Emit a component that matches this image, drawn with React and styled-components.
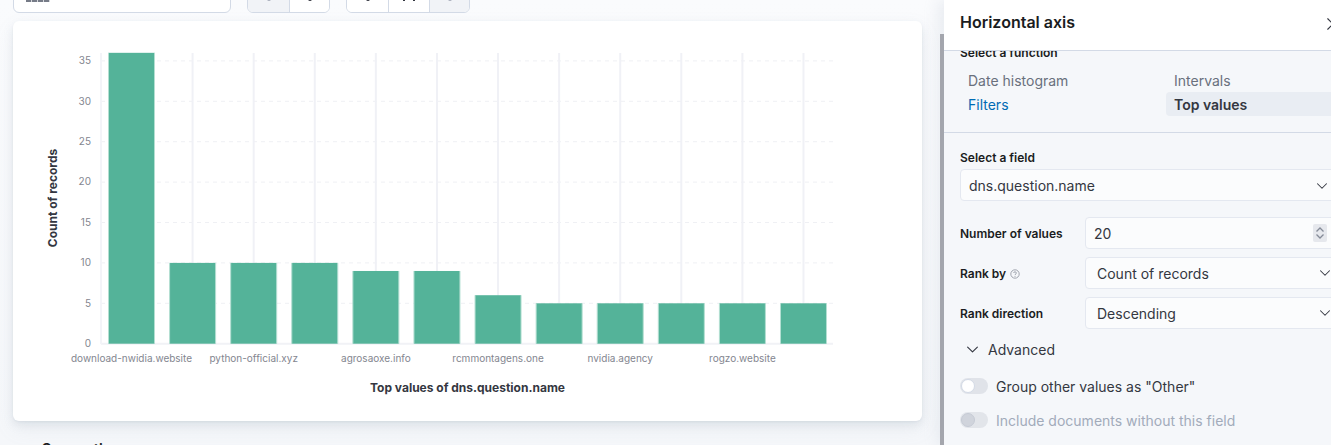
import React from "react";
import styled, { createGlobalStyle } from "styled-components";

const GlobalStyle = createGlobalStyle`
  html, body {
    margin: 0;
    padding: 0;
    width: 1331px;
    height: 445px;
    overflow: hidden;
    background: #f8f9fc;
    font-family: Inter, "Noto Sans", sans-serif;
  }
`;

const Page = styled.div`
  display: flex;
  width: 1331px;
  height: 445px;
  overflow: hidden;
  background: linear-gradient(180deg, #fafbfd 0%, #f5f7fa 100%);
`;

const Workspace = styled.div`
  flex: 0 0 940px;
  width: 940px;
  height: 445px;
  overflow: hidden;
`;

const Toolbar = styled.div`
  display: flex;
  align-items: flex-end;
  height: 13px;
  padding-left: 13px;
`;

const SearchBox = styled.div`
  display: flex;
  align-items: flex-end;
  width: 218px;
  height: 40px;
  box-sizing: border-box;
  padding: 0 0 10px 12px;
  background: #fff;
  border: 1px solid #d3dae6;
  border-radius: 6px;
`;

const SearchDots = styled.div`
  width: 24px;
  height: 3px;
  background: repeating-linear-gradient(90deg, #767b87 0 5px, #d5d7dc 5px 6px);
`;

const ButtonGroup = styled.div`
  display: flex;
  height: 40px;
  margin-left: 16px;
  box-sizing: border-box;
  border: 1px solid #d3dae6;
  border-radius: 6px;
  overflow: hidden;
  background: #fff;
`;

const GroupButton = styled.div`
  display: flex;
  justify-content: center;
  align-items: flex-end;
  width: ${(p) => p.$width}px;
  box-sizing: border-box;
  padding-bottom: 11px;
  background: ${(p) => (p.$muted ? "#f1f3f7" : "#fff")};
  border-left: ${(p) => (p.$first ? "none" : "1px solid #d3dae6")};
`;

const ButtonIconStub = styled.div`
  width: ${(p) => p.$width || 4}px;
  height: 2px;
  border-radius: 0 0 2px 2px;
  background: ${(p) => (p.$muted ? "#a9afbc" : "#343741")};
`;

const BracketStub = styled.div`
  width: 12px;
  height: 2px;
  background: linear-gradient(90deg, #343741 0 2px, transparent 2px 10px, #343741 10px 12px);
`;

const Card = styled.div`
  width: 909px;
  height: 400px;
  margin: 8px 0 0 13px;
  background: #fff;
  border-radius: 6px;
  box-shadow: 0 1px 2px rgba(152, 162, 179, 0.12), 0 4px 10px rgba(152, 162, 179, 0.18), 0 8px 20px rgba(152, 162, 179, 0.1);
  overflow: hidden;
`;

const ChartSvg = styled.svg`
  display: block;
  width: 909px;
  height: 400px;
  font-family: Inter, "Noto Sans", sans-serif;
`;

const SuggestionsTitle = styled.h3`
  margin: 18px 0 0 42px;
  font-size: 14px;
  line-height: 20px;
  font-weight: 700;
  color: #1a1c21;
`;

const ScrollThumb = styled.div`
  position: absolute;
  left: 940px;
  top: 34px;
  width: 4px;
  height: 411px;
  background: #a6a7ad;
`;

const Panel = styled.aside`
  flex: 0 0 410px;
  width: 410px;
  height: 445px;
  margin-left: 4px;
  background: #f5f7fa;
  box-shadow: -6px 0 14px rgba(152, 162, 179, 0.16);
  display: flex;
  flex-direction: column;
  overflow: hidden;
  position: relative;
`;

const PanelHeader = styled.header`
  flex: 0 0 51px;
  box-sizing: border-box;
  display: flex;
  align-items: center;
  padding: 0 16px 6px 16px;
  background: #fff;
  border-bottom: 1px solid #d3dae6;
  position: relative;
  z-index: 1;
`;

const PanelTitle = styled.h2`
  margin: 0;
  font-size: 16px;
  line-height: 24px;
  font-weight: 600;
  color: #1a1c21;
`;

const CloseButton = styled.div`
  position: absolute;
  left: 382px;
  top: 15px;
  width: 14px;
  height: 14px;
  color: #343741;
`;

const PanelBody = styled.div`
  flex: 1;
  overflow: hidden;
`;

const FunctionSection = styled.section`
  height: 87px;
  padding: 0 16px;
  margin-top: -6px;
  border-bottom: 1px solid #d3dae6;
`;

const FieldLabel = styled.div`
  font-size: 12px;
  line-height: 16px;
  font-weight: 600;
  color: #1a1c21;
`;

const FunctionGrid = styled.div`
  display: grid;
  grid-template-columns: 206px 206px;
  margin-top: 8px;
`;

const FunctionOption = styled.div`
  height: 24px;
  line-height: ${(p) => (p.$active ? 26 : 24)}px;
  margin-top: ${(p) => (p.$active ? -1 : 0)}px;
  font-size: 14px;
  padding-left: 8px;
  border-radius: 4px;
  color: ${(p) => p.$color || "#69707d"};
  font-weight: ${(p) => (p.$active ? 600 : 400)};
  background: ${(p) => (p.$active ? "#e9edf3" : "transparent")};
`;

const FieldSection = styled.section`
  padding: 17px 16px 0;
`;

const FieldBox = styled.div`
  display: flex;
  align-items: center;
  justify-content: space-between;
  box-sizing: border-box;
  height: 32px;
  margin-top: 3px;
  padding: 1px 0 0 8px;
  width: 376px;
  background: #fbfcfd;
  border: 1px solid #e4e8f0;
  border-radius: 4px;
  font-size: 14px;
  color: #343741;
`;

const Row = styled.div`
  display: flex;
  align-items: center;
  height: 32px;
  margin-top: ${(p) => p.$top}px;
`;

const RowLabel = styled.div`
  display: flex;
  align-items: center;
  gap: 4px;
  flex: 0 0 125px;
  padding-top: 1px;
  font-size: 12px;
  line-height: 16px;
  font-weight: 600;
  color: #1a1c21;
`;

const Control = styled.div`
  display: flex;
  flex: 0 0 255px;
  align-items: center;
  justify-content: space-between;
  box-sizing: border-box;
  height: 32px;
  padding: 0 0 0 ${(p) => (p.$number ? 8 : 11)}px;
  background: #fbfcfd;
  border: 1px solid #e4e8f0;
  border-radius: 4px;
  font-size: 14px;
  color: #343741;
`;

const Stepper = styled.div`
  display: flex;
  align-items: center;
  justify-content: center;
  width: 14px;
  height: 18px;
  margin-right: 12px;
  background: #e6e8ed;
  border-radius: 2px;
`;

const ChevronWrap = styled.span`
  display: inline-flex;
  margin-right: ${(p) => p.$right}px;
  color: #343741;
`;

const AdvancedToggle = styled.div`
  display: flex;
  align-items: center;
  gap: 9px;
  height: 20px;
  margin: 10px 0 0 6px;
  font-size: 14px;
  color: #343741;
`;

const SwitchRow = styled.div`
  display: flex;
  align-items: center;
  gap: 8px;
  height: 20px;
  margin-top: ${(p) => p.$top}px;
  font-size: 14px;
  color: ${(p) => (p.$disabled ? "#a2abba" : "#343741")};
`;

const SwitchTrack = styled.div`
  display: flex;
  align-items: center;
  width: 28px;
  height: 16px;
  border-radius: 8px;
  background: ${(p) => (p.$disabled ? "#e2e5ea" : "#e0e3e9")};
`;

const SwitchThumb = styled.div`
  width: 14px;
  height: 14px;
  margin-left: 1px;
  box-sizing: border-box;
  border-radius: 50%;
  background: ${(p) => (p.$disabled ? "#d0d4dc" : "#fff")};
  border: 1px solid ${(p) => (p.$disabled ? "#c6cbd5" : "#d3dae6")};
`;

const values = [36, 10, 10, 10, 9, 9, 6, 5, 5, 5, 5, 5];
const labels = ["download-nwidia.website", "python-official.xyz", "agrosaoxe.info", "rcmmontagens.one", "nvidia.agency", "rogzo.website"];
const ticks = [0, 5, 10, 15, 20, 25, 30, 35];

// chart coordinates are relative to the card, which starts at 13,21
const axisLeft = 88;
const axisRight = 820;
const baseline = 322.7;
const unit = 8.08;
const firstCenter = 118.5;
const step = 61.09;

function Chart() {
  return (
    <ChartSvg viewBox="0 0 909 400">
      {ticks.map((t) => (
        <line
          key={t}
          x1={axisLeft}
          x2={axisRight}
          y1={baseline - t * unit}
          y2={baseline - t * unit}
          stroke={t === 0 ? "#f1f2f6" : "#eff0f4"}
          strokeWidth={t === 0 ? 2 : 1}
          strokeDasharray={t === 0 ? undefined : "4 4"}
        />
      ))}
      <line x1={axisLeft} x2={axisLeft} y1={32} y2={323} stroke="#f3f4f8" strokeWidth="2" />
      {values.map((_, i) => (
        <line
          key={i}
          x1={firstCenter + i * step}
          x2={firstCenter + i * step}
          y1={32}
          y2={323}
          stroke="#f0f1f6"
          strokeWidth="2"
        />
      ))}
      {values.map((v, i) => (
        <g key={i}>
          <rect
            x={firstCenter + i * step - 23}
            y={baseline - v * unit}
            width={46}
            height={v * unit}
            fill="#54b399"
          />
          <rect x={firstCenter + i * step - 23.5} y={baseline - v * unit} width={1} height={v * unit} fill="#b4dfd2" />
          <rect x={firstCenter + i * step + 22.5} y={baseline - v * unit} width={1} height={v * unit} fill="#b4dfd2" />
        </g>
      ))}
      {ticks.map((t) => (
        <text key={t} x={78} y={baseline - t * unit + 3.2} textAnchor="end" fontSize="10" fill="#83868f">
          {t}
        </text>
      ))}
      {labels.map((l, i) => (
        <text key={l} x={firstCenter + i * 2 * step} y={341} textAnchor="middle" fontSize="10" fill="#83868f">
          {l}
        </text>
      ))}
      <text x={454.5} y={371} textAnchor="middle" fontSize="12" fontWeight="700" fill="#343741">
        Top values of dns.question.name
      </text>
      <text
        transform="translate(44 177) rotate(-90)"
        textAnchor="middle"
        fontSize="12"
        fontWeight="700"
        fill="#343741"
      >
        Count of records
      </text>
    </ChartSvg>
  );
}

function Chevron({ size = 12 }) {
  return (
    <svg width={size} height={size} viewBox="0 0 16 16" fill="none">
      <path
        d="M2 5 L8 11 L14 5"
        stroke="currentColor"
        strokeWidth="1.4"
        strokeLinecap="round"
        strokeLinejoin="round"
      />
    </svg>
  );
}

function HelpIcon() {
  return (
    <svg width="10" height="10" viewBox="0 0 10 10" fill="none">
      <circle cx="5" cy="5" r="4.2" stroke="#8c919c" strokeWidth="0.8" />
      <path d="M3.6 4 C3.6 2.4 6.4 2.4 6.4 4 C6.4 5 5 5 5 6" stroke="#8c919c" strokeWidth="0.8" />
      <circle cx="5" cy="7.3" r="0.5" fill="#8c919c" />
    </svg>
  );
}

export default function App() {
  return (
    <>
      <GlobalStyle />
      <Page>
        <Workspace>
          <Toolbar>
            <SearchBox>
              <SearchDots />
            </SearchBox>
            <ButtonGroup>
              <GroupButton $width={41} $first $muted>
                <ButtonIconStub $muted />
              </GroupButton>
              <GroupButton $width={40}>
                <ButtonIconStub />
              </GroupButton>
            </ButtonGroup>
            <ButtonGroup>
              <GroupButton $width={41} $first>
                <ButtonIconStub />
              </GroupButton>
              <GroupButton $width={41}>
                <BracketStub />
              </GroupButton>
              <GroupButton $width={40} $muted>
                <ButtonIconStub $muted />
              </GroupButton>
            </ButtonGroup>
          </Toolbar>
          <Card>
            <Chart />
          </Card>
          <SuggestionsTitle>Suggestions</SuggestionsTitle>
        </Workspace>
        <ScrollThumb />
        <Panel>
          <PanelHeader>
            <PanelTitle>Horizontal axis</PanelTitle>
            <CloseButton>
              <svg width="14" height="14" viewBox="0 0 16 16" fill="none">
                <path d="M2 2 L14 14 M14 2 L2 14" stroke="currentColor" strokeWidth="1.3" strokeLinecap="round" />
              </svg>
            </CloseButton>
          </PanelHeader>
          <PanelBody>
            <FunctionSection>
              <FieldLabel>Select a function</FieldLabel>
              <FunctionGrid>
                <FunctionOption>Date histogram</FunctionOption>
                <FunctionOption>Intervals</FunctionOption>
                <FunctionOption $color="#006bb4">Filters</FunctionOption>
                <FunctionOption $active $color="#343741">
                  Top values
                </FunctionOption>
              </FunctionGrid>
            </FunctionSection>
            <FieldSection>
              <FieldLabel>Select a field</FieldLabel>
              <FieldBox>
                dns.question.name
                <ChevronWrap $right={7}>
                  <Chevron />
                </ChevronWrap>
              </FieldBox>
              <Row $top={16}>
                <RowLabel>Number of values</RowLabel>
                <Control $number>
                  20
                  <Stepper>
                    <svg width="10" height="16" viewBox="0 0 10 16" fill="none">
                      <path d="M1.5 6.5 L5 3 L8.5 6.5 M1.5 9.5 L5 13 L8.5 9.5" stroke="#858b98" strokeWidth="1.3" />
                    </svg>
                  </Stepper>
                </Control>
              </Row>
              <Row $top={8}>
                <RowLabel>
                  Rank by
                  <HelpIcon />
                </RowLabel>
                <Control>
                  Count of records
                  <ChevronWrap $right={8}>
                    <Chevron />
                  </ChevronWrap>
                </Control>
              </Row>
              <Row $top={8}>
                <RowLabel>Rank direction</RowLabel>
                <Control>
                  Descending
                  <ChevronWrap $right={8}>
                    <Chevron />
                  </ChevronWrap>
                </Control>
              </Row>
              <AdvancedToggle>
                <Chevron size={13} />
                Advanced
              </AdvancedToggle>
              <SwitchRow $top={17}>
                <SwitchTrack>
                  <SwitchThumb />
                </SwitchTrack>
                Group other values as "Other"
              </SwitchRow>
              <SwitchRow $top={14} $disabled>
                <SwitchTrack $disabled>
                  <SwitchThumb $disabled />
                </SwitchTrack>
                Include documents without this field
              </SwitchRow>
            </FieldSection>
          </PanelBody>
        </Panel>
      </Page>
    </>
  );
}
